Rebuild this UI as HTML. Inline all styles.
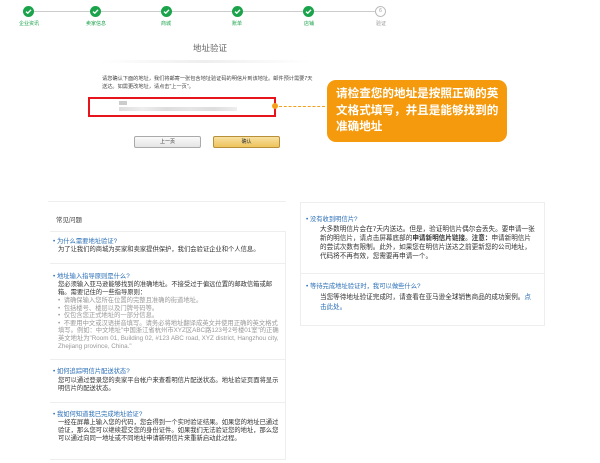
<!DOCTYPE html>
<html><head><meta charset="utf-8">
<style>
*{margin:0;padding:0;box-sizing:border-box}
body{width:600px;height:463px;background:#fff;position:relative;overflow:hidden;font-family:"Liberation Sans","Noto Sans CJK SC",sans-serif;color:#333}
.a{position:absolute}
.line{position:absolute;top:11px;height:1px;background:#ccc}
.st{position:absolute;top:6px;width:11px;height:11px;border-radius:50%;background:#1aa34a}
.st svg{position:absolute;left:2px;top:2px}
.lb{position:absolute;top:20px;font-size:5px;color:#1aa34a;width:40px;text-align:center}
.q{color:#2b6fb6;font-size:6.3px;line-height:8px;position:absolute}
.t{position:absolute;font-size:6.3px;line-height:8px;width:222px}
.hr{position:absolute;height:1px;background:#eee}
.g{color:#999}
</style></head><body>
<div class="line" style="left:29px;width:351px"></div>
<div class="st" style="left:23px"><svg width="7" height="7" viewBox="0 0 7 7"><path d="M1 3.6L2.8 5.2L6 1.8" stroke="#fff" stroke-width="1.4" fill="none"/></svg></div>
<div class="st" style="left:90px"><svg width="7" height="7" viewBox="0 0 7 7"><path d="M1 3.6L2.8 5.2L6 1.8" stroke="#fff" stroke-width="1.4" fill="none"/></svg></div>
<div class="st" style="left:161px"><svg width="7" height="7" viewBox="0 0 7 7"><path d="M1 3.6L2.8 5.2L6 1.8" stroke="#fff" stroke-width="1.4" fill="none"/></svg></div>
<div class="st" style="left:232px"><svg width="7" height="7" viewBox="0 0 7 7"><path d="M1 3.6L2.8 5.2L6 1.8" stroke="#fff" stroke-width="1.4" fill="none"/></svg></div>
<div class="st" style="left:303px"><svg width="7" height="7" viewBox="0 0 7 7"><path d="M1 3.6L2.8 5.2L6 1.8" stroke="#fff" stroke-width="1.4" fill="none"/></svg></div>
<div class="st" style="left:375px;background:#fff;border:1px solid #bbb;font-size:5px;color:#999;text-align:center;line-height:9px">6</div>
<div class="lb" style="left:9px">企业资讯</div>
<div class="lb" style="left:76px">卖家信息</div>
<div class="lb" style="left:146px">商城</div>
<div class="lb" style="left:217px">账单</div>
<div class="lb" style="left:289px">店铺</div>
<div class="lb" style="left:361px;color:#999">验证</div>

<div class="a" style="left:150px;top:42px;width:120px;text-align:center;font-size:8.5px;color:#666">地址验证</div>
<div class="a" style="left:100px;top:60px;width:210px;height:3px;background:linear-gradient(90deg,#fff,#eee,#fff)"></div>
<div class="a" style="left:102px;top:75px;width:214px;font-size:5.2px;line-height:8px;color:#444">请您确认下面的地址，我们将邮寄一张包含地址验证码的明信片到该地址。邮件预计需要7天送达。如需更改地址，请点击"上一页"。</div>
<div class="a" style="left:88px;top:97px;width:188px;height:20px;border:2px solid #e8141b"></div>
<div class="a" style="left:119px;top:101px;width:8px;height:4px;background:#ccc"></div>
<div class="a" style="left:119px;top:107px;width:118px;height:4px;background:linear-gradient(90deg,#ddd,#eee 20%,#ddd 40%,#e6e6e6 60%,#ddd 80%,#eee)"></div>
<div class="a" style="left:272px;top:103px;width:6px;height:6px;border-radius:50%;background:#f5a01a"></div>
<div class="a" style="left:279px;top:105.5px;width:46px;border-top:1px dashed #f5a01a"></div>
<div class="a" style="left:327px;top:80px;width:180px;height:62px;border-radius:9px;background:#f59a0c;color:#fff;font-size:11.6px;font-weight:bold;line-height:16.5px;padding:6px 0 0 9px">请检查您的地址是按照正确的英文格式填写，并且是能够找到的准确地址</div>
<div class="a" style="left:134px;top:136px;width:67px;height:12px;border:1px solid #aaa;border-radius:2px;background:linear-gradient(#fafafa,#e4e4e4);font-size:5px;text-align:center;line-height:10px">上一页</div>
<div class="a" style="left:213px;top:136px;width:67px;height:12px;border:1px solid #b8903a;border-radius:2px;background:linear-gradient(#f8e0a0,#eec35a);font-size:5px;text-align:center;line-height:10px">确认</div>

<div class="hr" style="left:48px;top:201px;width:238px"></div>
<div class="a" style="left:56px;top:214px;font-size:6.5px;color:#444">常见问题</div>
<div class="hr" style="left:50px;top:231px;width:236px"></div>
<div class="q" style="left:53px;top:238px">• 为什么需要地址验证?</div>
<div class="t" style="left:58px;top:246px">为了让我们的商城为买家和卖家提供保护，我们会验证企业和个人信息。</div>
<div class="hr" style="left:50px;top:263px;width:236px"></div>
<div class="q" style="left:53px;top:273px">• 地址输入指导原则是什么?</div>
<div class="t" style="left:58px;top:281px">您必须输入亚马逊能够找到的准确地址。不接受过于偏远位置的邮政信箱或邮箱。需要记住的一些指导原则：
<div class="g" style="line-height:7.6px">•&nbsp; 请确保输入您所在位置的完整且准确的街道地址。<br>•&nbsp; 包括楼号、楼层以及门牌号码等。<br>•&nbsp; 仅包含您正式地址的一部分信息。<br>•&nbsp; 不要用中文或汉语拼音填写。请务必将地址翻译成英文并使用正确的英文格式填写。例如：中文地址"中国浙江省杭州市XYZ区ABC路123号2号楼01室"的正确英文地址为"Room 01, Building 02, #123 ABC road, XYZ district, Hangzhou city, Zhejiang province, China."</div></div>
<div class="hr" style="left:50px;top:359px;width:236px"></div>
<div class="q" style="left:53px;top:368px">• 如何追踪明信片配送状态?</div>
<div class="t" style="left:58px;top:377px">您可以通过登录您的卖家平台帐户来查看明信片配送状态。地址验证页面将显示明信片的配送状态。</div>
<div class="hr" style="left:50px;top:402px;width:236px"></div>
<div class="q" style="left:53px;top:411px">• 我如何知道我已完成地址验证?</div>
<div class="t" style="left:58px;top:419px">一经在屏幕上输入您的代码，您会得到一个实时验证结果。如果您的地址已通过验证，那么您可以继续提交您的身份证件。如果我们无法验证您的地址，那么您可以通过向同一地址或不同地址申请新明信片来重新启动此过程。</div>
<div class="hr" style="left:50px;top:459px;width:236px"></div>
<div class="a" style="left:285px;top:232px;width:1px;height:228px;background:#eee"></div>

<div class="a" style="left:300px;top:202px;width:245px;height:124px;border:1px solid #eee;border-bottom:none"></div>
<div class="q" style="left:306px;top:216px;line-height:8.8px">• 没有收到明信片?</div>
<div class="t" style="left:320px;top:226px;width:216px;font-size:6.6px;line-height:8.9px">大多数明信片会在7天内送达。但是，验证明信片偶尔会丢失。要申请一张新的明信片，请点击屏幕底部的<b>申请新明信片链接</b>。<b>注意：</b>申请新明信片的尝试次数有限制。此外，如果您在明信片送达之前更新您的公司地址，代码将不再有效，您需要再申请一个。</div>
<div class="hr" style="left:300px;top:273px;width:245px"></div>
<div class="q" style="left:306px;top:283px">• 等待完成地址验证时，我可以做些什么?</div>
<div class="t" style="left:320px;top:293px;width:216px;font-size:6.6px;line-height:9.5px">当您等待地址验证完成时，请查看在亚马逊全球销售商品的成功案例。<span style="color:#2b6fb6">点击此处。</span></div>
<div class="hr" style="left:300px;top:325px;width:245px"></div>
</body></html>
